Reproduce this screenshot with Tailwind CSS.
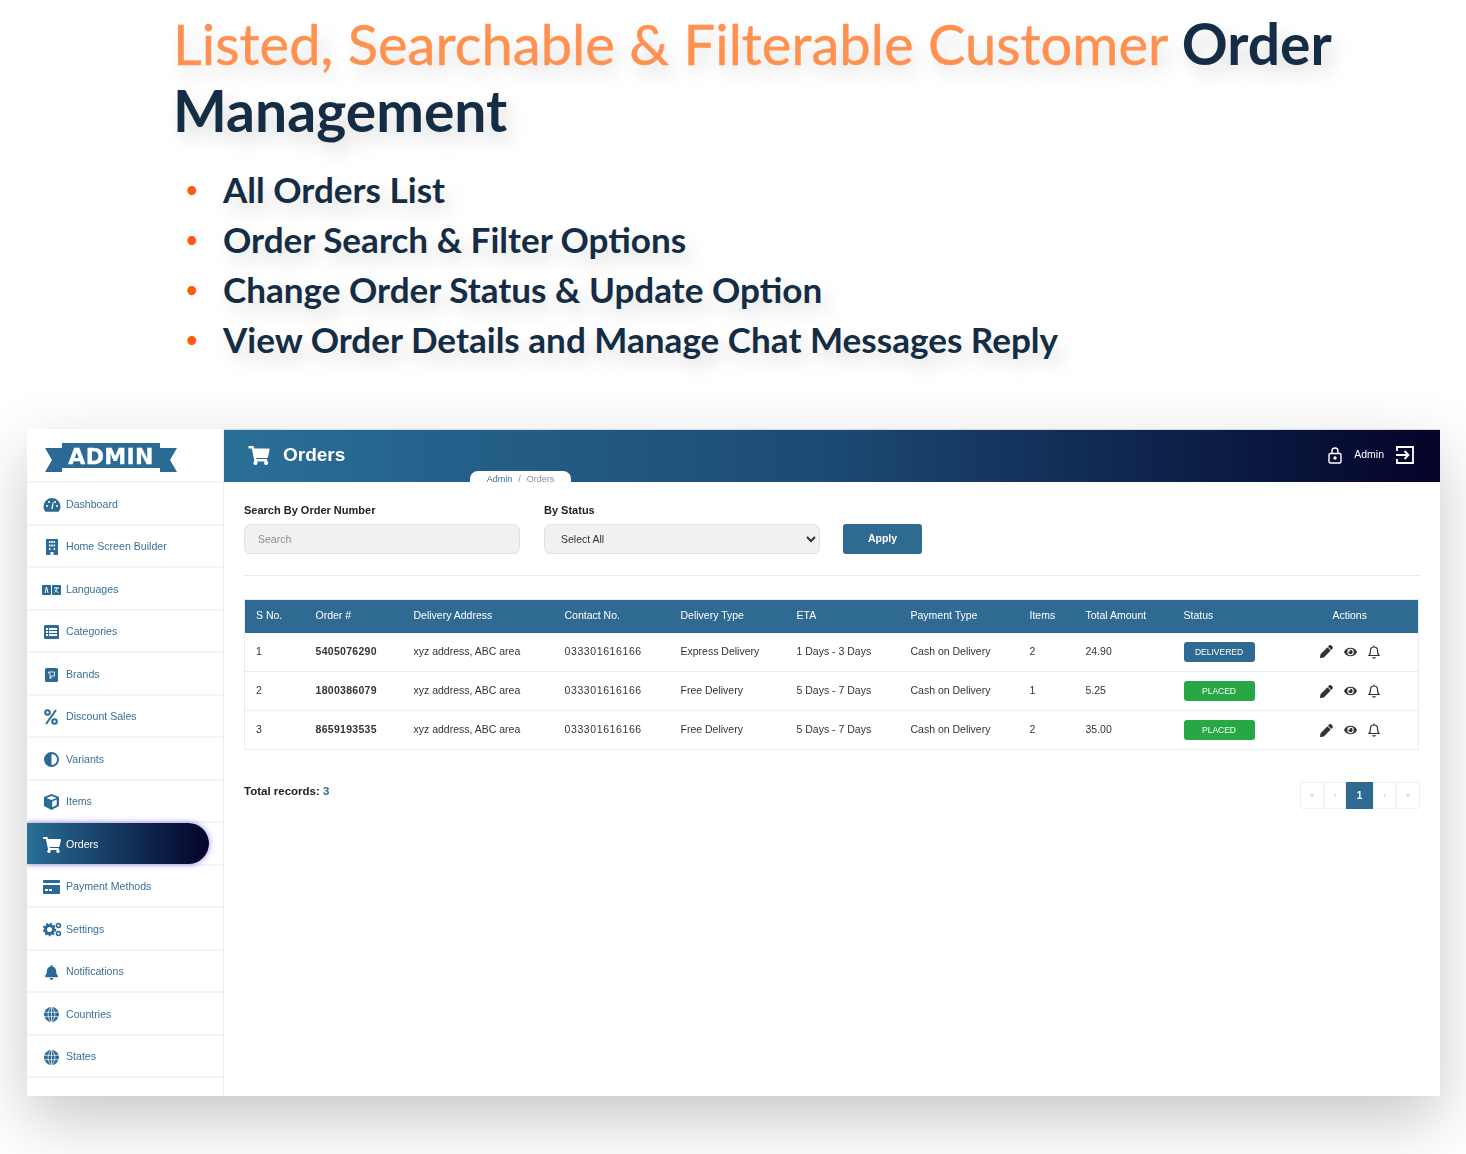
<!DOCTYPE html>
<html lang="en">
<head>
    <meta charset="UTF-8" />
    <title>Customer Order Management</title>
    <script src="https://cdn.jsdelivr.net/npm/@tailwindcss/browser@4"></script>
</head>
<body class="bg-white font-['Lato',sans-serif] w-[1466px] h-[1154px] overflow-hidden">

    <section class="pl-[173px] pr-[100px] pt-[10px] h-[429px] [text-shadow:6px_10px_18px_rgba(0,0,0,0.15)]">
        <h1 class="text-[56.1px] leading-[67px] text-[#ff9150] [-webkit-text-stroke:0.4px_#ff9150]">Listed, Searchable &amp; Filterable Customer <span class="text-[57px] font-bold text-[#142d44] [-webkit-text-stroke:0]">Order</span> <span class="text-[57px] font-bold text-[#142d44] [-webkit-text-stroke:0]">Management</span></h1>
        <ul class="mt-[20px] text-[35.1px] leading-[50px] font-bold text-[#142d44]">
            <li class="flex items-center"><span class="w-[50px] text-[#ff5a0a] pl-[13px] text-[20px] [text-shadow:none]">•</span>All Orders List</li>
            <li class="flex items-center"><span class="w-[50px] text-[#ff5a0a] pl-[13px] text-[20px] [text-shadow:none]">•</span>Order Search &amp; Filter Options</li>
            <li class="flex items-center"><span class="w-[50px] text-[#ff5a0a] pl-[13px] text-[20px] [text-shadow:none]">•</span>Change Order Status &amp; Update Option</li>
            <li class="flex items-center"><span class="w-[50px] text-[#ff5a0a] pl-[13px] text-[20px] [text-shadow:none]">•</span>View Order Details and Manage Chat Messages Reply</li>
        </ul>
    </section>

    <div class="ml-[27px] w-[1413px] h-[667px] bg-white shadow-[0_24px_60px_rgba(0,0,0,0.22)]">
        <div class="flex h-full [filter:blur(0.6px)] font-['Liberation_Sans',sans-serif]">

            <!-- sidebar -->
            <aside class="w-[197px] shrink-0 overflow-hidden border-r border-[#eeeeee] text-[10.6px] text-[#3a6f96]">
                <div class="h-[54px] border-b-2 border-[#f3f3f3] pl-[17px] pt-[13px]">
                    <svg width="134" height="32" viewBox="0 0 134 32">
                        <polygon points="18,1 116,1 116,6 133,6 126,18 133,30 116,30 116,26 18,26 18,30 1,30 8,18 1,6 18,6" fill="#2a6a94"/>
                        <text x="67" y="22" text-anchor="middle" fill="#fff" stroke="#fff" stroke-width="0.3" font-family="DejaVu Sans" font-weight="700" font-size="22" letter-spacing="0.3">ADMIN</text>
                    </svg>
                </div>
                <a class="h-[42.5px] pt-[3px] flex items-center border-b-2 border-[#f3f3f3]"><span class="w-[39px] pl-[16px] shrink-0"><svg class="w-[18px] h-[16px]" viewBox="0 0 18 16" fill="#2a6a94"><path d="M9 1a8.500 8.500 0 0 0-8.500 8.500c0 2 .8 3.800 1.800 5.200h13.400c1-1.400 1.800-3.200 1.800-5.200A8.500 8.500 0 0 0 9 1z"/><circle cx="4" cy="9" r="1" fill="#fff"/><circle cx="6" cy="5" r="1" fill="#fff"/><circle cx="12" cy="5" r="1" fill="#fff"/><circle cx="14" cy="9" r="1" fill="#fff"/><path d="M8.300 12l1.500-7 .8.200L9.700 12z" fill="#fff"/></svg></span>Dashboard</a>
                <a class="h-[42.5px] pt-[3px] flex items-center border-b-2 border-[#f3f3f3]"><span class="w-[39px] pl-[19px] shrink-0"><svg class="w-[12px] h-[16px]" viewBox="0 0 12 16" fill="#2a6a94"><path d="M0 0h12v16H7.500v-3h-3v3H0z"/><path d="M3 2h1.500v2H3zM5.300 2h1.500v2H5.300zM7.600 2h1.500v2H7.600zM3 5.500h1.500v2H3zM5.300 5.500h1.500v2H5.300zM7.600 5.500h1.500v2H7.600zM3 9h1.500v2H3zM7.600 9h1.500v2H7.600z" fill="#fff"/></svg></span>Home Screen Builder</a>
                <a class="h-[42.5px] pt-[3px] flex items-center border-b-2 border-[#f3f3f3]"><span class="w-[39px] pl-[15px] shrink-0"><svg class="w-[19px] h-[10px]" viewBox="0 0 19 10" fill="#2a6a94"><rect width="9" height="10" rx="1"/><rect x="10" width="9" height="10" rx="1"/><path d="M3 8l1.500-6 1.500 6M12 3h5M14.500 3c0 2-1 3.500-2 4.500M13.500 5c1 1.500 2 2.300 3 2.600" fill="none" stroke="#fff"/></svg></span>Languages</a>
                <a class="h-[42.5px] pt-[3px] flex items-center border-b-2 border-[#f3f3f3]"><span class="w-[39px] pl-[17px] shrink-0"><svg class="w-[15px] h-[14px]" viewBox="0 0 15 14" fill="#2a6a94"><rect width="15" height="14" rx="1.500"/><path d="M2 3h2v2H2zM5 3h8v2H5zM2 6h2v2H2zM5 6h8v2H5zM2 9h2v2H2zM5 9h8v2H5z" fill="#fff"/></svg></span>Categories</a>
                <a class="h-[42.5px] pt-[3px] flex items-center border-b-2 border-[#f3f3f3]"><span class="w-[39px] pl-[18px] shrink-0"><svg class="w-[13px] h-[14px]" viewBox="0 0 13 14" fill="#2a6a94"><rect width="13" height="14" rx="1.500"/><path d="M3.500 4h6v4h-3.500v2.500h-1V5h-1.500z" fill="none" stroke="#fff" stroke-width=".8"/></svg></span>Brands</a>
                <a class="h-[42.5px] pt-[3px] flex items-center border-b-2 border-[#f3f3f3]"><span class="w-[39px] pl-[17px] shrink-0"><svg class="w-[14px] h-[16px]" viewBox="0 0 14 16" fill="none" stroke="#2a6a94" stroke-width="2"><circle cx="3.500" cy="3.500" r="2.300"/><circle cx="10.500" cy="12.500" r="2.300"/><path d="M12 1L2 15"/></svg></span>Discount Sales</a>
                <a class="h-[42.5px] pt-[3px] flex items-center border-b-2 border-[#f3f3f3]"><span class="w-[39px] pl-[17px] shrink-0"><svg class="w-[15px] h-[15px]" viewBox="0 0 15 15"><circle cx="7.500" cy="7.500" r="6.500" fill="none" stroke="#2a6a94" stroke-width="2"/><path d="M7.500 1a6.500 6.500 0 0 0 0 13z" fill="#2a6a94"/></svg></span>Variants</a>
                <a class="h-[42.5px] pt-[3px] flex items-center border-b-2 border-[#f3f3f3]"><span class="w-[39px] pl-[17px] shrink-0"><svg class="w-[15px] h-[16px]" viewBox="0 0 15 16" fill="#2a6a94"><path d="M7.500 0L15 3v9l-7.500 4L0 12V3z"/><path d="M2.500 4l5-2 5 2-5 2zM8.200 7.500l4.500-2v5.500l-4.500 2.300z" fill="#fff"/></svg></span>Items</a>
                <a class="h-[42.5px] flex items-center border-b-2 border-[#f3f3f3]"><span class="flex items-center h-[41px] w-[182px] pt-[3px] rounded-r-[21px] bg-gradient-to-r from-[#2a6f97] to-[#05042a] text-white shadow-[0_0_6px_rgba(110,80,230,0.7)]"><span class="w-[39px] pl-[16px] shrink-0"><svg class="w-[18px] h-[16px]" viewBox="0 0 576 512" fill="#fff"><path d="M528.120 301.319l47.273-208C578.806 78.301 567.391 64 551.990 64H159.208l-9.166-44.810C147.758 8.021 137.930 0 126.529 0H24C10.745 0 0 10.745 0 24v16c0 13.255 10.745 24 24 24h69.883l70.248 343.435C147.325 417.100 136 435.222 136 456c0 30.928 25.072 56 56 56s56-25.072 56-56c0-15.674-6.447-29.835-16.824-40h209.647C430.447 426.165 424 440.326 424 456c0 30.928 25.072 56 56 56s56-25.072 56-56c0-22.172-12.888-41.332-31.579-50.405l5.517-24.276c3.413-15.018-8.002-29.319-23.403-29.319H218.117l-6.545-32h293.145c11.206 0 20.920-7.754 23.403-18.681z"/></svg></span>Orders</span></a>
                <a class="h-[42.5px] pt-[3px] flex items-center border-b-2 border-[#f3f3f3]"><span class="w-[39px] pl-[16px] shrink-0"><svg class="w-[17px] h-[14px]" viewBox="0 0 17 14" fill="#2a6a94"><rect width="17" height="3" rx="1"/><path d="M0 5h17v8a1 1 0 0 1-1 1H1a1 1 0 0 1-1-1z"/><path d="M2 9h3v2H2zM6 9h3v2H6z" fill="#fff"/></svg></span>Payment Methods</a>
                <a class="h-[42.5px] pt-[3px] flex items-center border-b-2 border-[#f3f3f3]"><span class="w-[39px] pl-[16px] shrink-0"><svg class="w-[19px] h-[15px]" viewBox="0 0 19 15"><circle cx="6.500" cy="7.500" r="4" fill="none" stroke="#2a6a94" stroke-width="3"/><circle cx="6.500" cy="7.500" r="6" fill="none" stroke="#2a6a94" stroke-width="1.600" stroke-dasharray="2 2"/><circle cx="15.500" cy="3.500" r="2" fill="none" stroke="#2a6a94" stroke-width="1.500"/><circle cx="15.500" cy="11.500" r="2" fill="none" stroke="#2a6a94" stroke-width="1.500"/></svg></span>Settings</a>
                <a class="h-[42.5px] pt-[3px] flex items-center border-b-2 border-[#f3f3f3]"><span class="w-[39px] pl-[18px] shrink-0"><svg class="w-[13px] h-[15px]" viewBox="0 0 448 512" fill="#2a6a94"><path d="M224 512c35.320 0 63.970-28.650 63.970-64H160.030c0 35.350 28.650 64 63.970 64zm215.390-149.710c-19.320-20.760-55.470-51.990-55.470-154.290 0-77.700-54.480-139.900-127.940-155.160V32c0-17.670-14.320-32-31.980-32s-31.980 14.330-31.980 32v20.840C118.560 68.100 64.080 130.300 64.080 208c0 102.300-36.150 133.530-55.470 154.290-6 6.450-8.660 14.160-8.610 21.710.11 16.400 12.980 32 32.100 32h383.800c19.120 0 32-15.600 32.100-32 .05-7.550-2.610-15.270-8.610-21.710z"/></svg></span>Notifications</a>
                <a class="h-[42.5px] pt-[3px] flex items-center border-b-2 border-[#f3f3f3]"><span class="w-[39px] pl-[17px] shrink-0"><svg class="w-[15px] h-[15px]" viewBox="0 0 15 15" fill="#2a6a94"><circle cx="7.500" cy="7.500" r="7.500"/><path d="M0 5.300h15M0 9.700h15M7.500 0v15M7.500 0C3 4 3 11 7.500 15M7.500 0C12 4 12 11 7.500 15" fill="none" stroke="#fff" stroke-width=".7"/></svg></span>Countries</a>
                <a class="h-[42.5px] pt-[3px] flex items-center border-b-2 border-[#f3f3f3]"><span class="w-[39px] pl-[17px] shrink-0"><svg class="w-[15px] h-[15px]" viewBox="0 0 15 15" fill="#2a6a94"><circle cx="7.500" cy="7.500" r="7.500"/><path d="M0 5.300h15M0 9.700h15M7.500 0v15M7.500 0C3 4 3 11 7.500 15M7.500 0C12 4 12 11 7.500 15" fill="none" stroke="#fff" stroke-width=".7"/></svg></span>States</a>
            </aside>

            <main class="flex-1 min-w-0">
                <header class="relative h-[53px] pb-[2px] bg-gradient-to-r from-[#2a6f97] via-[#1c4a74] to-[#05042a] flex items-center text-white pl-[24px] pr-[25px] border-t border-[#d8d8d8]">
                    <svg class="w-[22px] h-[19px] mr-[13px]" viewBox="0 0 576 512" fill="#fff"><path d="M528.120 301.319l47.273-208C578.806 78.301 567.391 64 551.990 64H159.208l-9.166-44.810C147.758 8.021 137.930 0 126.529 0H24C10.745 0 0 10.745 0 24v16c0 13.255 10.745 24 24 24h69.883l70.248 343.435C147.325 417.100 136 435.222 136 456c0 30.928 25.072 56 56 56s56-25.072 56-56c0-15.674-6.447-29.835-16.824-40h209.647C430.447 426.165 424 440.326 424 456c0 30.928 25.072 56 56 56s56-25.072 56-56c0-22.172-12.888-41.332-31.579-50.405l5.517-24.276c3.413-15.018-8.002-29.319-23.403-29.319H218.117l-6.545-32h293.145c11.206 0 20.920-7.754 23.403-18.681z"/></svg>
                    <h2 class="text-[19px] font-bold">Orders</h2>
                    <div class="ml-auto flex items-center text-[10.5px]">
                        <svg class="w-[14px] h-[17px] mr-[12px]" viewBox="0 0 14 17" fill="none" stroke="#fff" stroke-width="1.400"><rect x="1" y="6.500" width="12" height="9.500" rx="1.500"/><path d="M4 6.500V4a3 3 0 0 1 6 0v2.500"/><circle cx="7" cy="11" r="1" fill="#fff"/></svg>
                        <span class="mr-[11px]">Admin</span>
                        <svg class="w-[20px] h-[20px]" viewBox="0 0 20 20" fill="none" stroke="#fff" stroke-width="1.800"><path d="M2 6V2h16v16H2v-4"/><path d="M1 10h12M9.500 6l4 4-4 4"/></svg>
                    </div>
                    <nav class="absolute left-[246px] bottom-0 h-[11px] w-[101px] pt-[6px] bg-white rounded-t-[8px] flex items-center justify-center text-[9px] text-[#8a8f96] gap-[6px]"><span class="text-[#3a6f96]">Admin</span><span>/</span><span>Orders</span></nav>
                </header>

                <div class="px-[20px]">
                    <form class="flex items-end h-[72px]">
                        <div class="w-[276px] mr-[24px]">
                            <label class="block text-[11px] font-bold text-[#222] mb-[8px] leading-[12px]">Search By Order Number</label>
                            <input placeholder="Search" class="w-full h-[30px] px-[13px] bg-[#f1f1f1] border border-[#e3e3e3] rounded-[6px] text-[10.5px] placeholder:text-[#8d8d8d]" />
                        </div>
                        <div class="w-[276px] mr-[23px]">
                            <label class="block text-[11px] font-bold text-[#222] mb-[8px] leading-[12px]">By Status</label>
                            <select class="w-full h-[30px] px-[12px] bg-[#f1f1f1] border border-[#e3e3e3] rounded-[6px] text-[10.5px] text-[#333]"><option>Select All</option></select>
                        </div>
                        <button type="button" class="w-[79px] h-[30px] pb-[1px] rounded-[3px] bg-[#2f6a92] text-white text-[10.5px] font-bold">Apply</button>
                    </form>
                    <hr class="mt-[21px] border-[#ececec]" />

                    <table class="mt-[24px] -translate-y-[1px] w-[1175px] table-fixed border-collapse text-[10.5px] text-[#333] border border-[#ececec]">
                        <colgroup><col class="w-[59px]"/><col class="w-[98px]"/><col class="w-[151px]"/><col class="w-[117px]"/><col class="w-[116px]"/><col class="w-[114px]"/><col class="w-[119px]"/><col class="w-[56px]"/><col class="w-[98px]"/><col class="w-[109px]"/><col/></colgroup>
                        <thead class="bg-[#2f6a92] text-white text-left">
                            <tr class="h-[33px]">
                                <th class="pl-[11px] font-normal">S No.</th><th class="pl-[12px] font-normal">Order #</th><th class="pl-[12px] font-normal">Delivery Address</th><th class="pl-[12px] font-normal">Contact No.</th><th class="pl-[11px] font-normal">Delivery Type</th><th class="pl-[11px] font-normal">ETA</th><th class="pl-[11px] font-normal">Payment Type</th><th class="pl-[11px] font-normal">Items</th><th class="pl-[11px] font-normal">Total Amount</th><th class="pl-[11px] font-normal">Status</th><th class="font-normal text-center">Actions</th>
                            </tr>
                        </thead>
                        <tbody>
                            <tr class="h-[39px] border-b border-[#ececec]">
                                <td class="pl-[11px]">1</td><td class="pl-[12px] font-bold tracking-[0.3px]">5405076290</td><td class="pl-[12px]">xyz address, ABC area</td><td class="pl-[12px] tracking-[0.6px]">033301616166</td><td class="pl-[11px]">Express Delivery</td><td class="pl-[11px]">1 Days - 3 Days</td><td class="pl-[11px]">Cash on Delivery</td><td class="pl-[11px]">2</td><td class="pl-[11px]">24.90</td>
                                <td class="pl-[11px]"><span class="block w-[71px] h-[20px] leading-[20px] text-center rounded-[3px] bg-[#2f6a92] text-white text-[8.5px]">DELIVERED</span></td>
                                <td><div class="flex items-center justify-center gap-[11px]">
                                    <svg class="w-[13px] h-[13px]" viewBox="0 0 512 512" fill="#333"><path d="M497.900 142.100l-46.100 46.100c-4.700 4.700-12.300 4.700-17 0l-111-111c-4.700-4.700-4.700-12.300 0-17l46.100-46.100c18.700-18.700 49.100-18.700 67.900 0l60.100 60.100c18.800 18.700 18.800 49.100 0 67.900zM284.200 99.800L21.600 362.400.4 483.900c-2.900 16.400 11.400 30.600 27.800 27.800l121.500-21.300 262.600-262.600c4.700-4.700 4.700-12.300 0-17l-111-111c-4.800-4.700-12.400-4.700-17.100 0z"/></svg>
                                    <svg class="w-[13px] h-[12px]" viewBox="0 0 576 512" fill="#333"><path d="M572.520 241.400C518.290 135.590 410.930 64 288 64S57.680 135.640 3.480 241.410a32.350 32.350 0 0 0 0 29.190C57.710 376.410 165.070 448 288 448s230.320-71.640 284.520-177.410a32.350 32.350 0 0 0 0-29.190zM288 400a144 144 0 1 1 144-144 143.930 143.930 0 0 1-144 144zm0-240a95.310 95.310 0 0 0-25.310 3.790 47.850 47.850 0 0 1-66.900 66.900A95.780 95.780 0 1 0 288 160z"/></svg>
                                    <svg class="w-[12px] h-[14px]" viewBox="0 0 12 14" fill="none" stroke="#333" stroke-width="1.200"><path d="M1 10.500c1-1 1.500-2.500 1.500-5a3.500 3.500 0 0 1 7 0c0 2.500.5 4 1.500 5zM6 2V.5M4.800 12a1.200 1.200 0 0 0 2.400 0"/></svg>
                                </div></td>
                            </tr>
                            <tr class="h-[39px] border-b border-[#ececec]">
                                <td class="pl-[11px]">2</td><td class="pl-[12px] font-bold tracking-[0.3px]">1800386079</td><td class="pl-[12px]">xyz address, ABC area</td><td class="pl-[12px] tracking-[0.6px]">033301616166</td><td class="pl-[11px]">Free Delivery</td><td class="pl-[11px]">5 Days - 7 Days</td><td class="pl-[11px]">Cash on Delivery</td><td class="pl-[11px]">1</td><td class="pl-[11px]">5.25</td>
                                <td class="pl-[11px]"><span class="block w-[71px] h-[20px] leading-[20px] text-center rounded-[3px] bg-[#28a745] text-white text-[8.5px]">PLACED</span></td>
                                <td><div class="flex items-center justify-center gap-[11px]">
                                    <svg class="w-[13px] h-[13px]" viewBox="0 0 512 512" fill="#333"><path d="M497.900 142.100l-46.100 46.100c-4.700 4.700-12.300 4.700-17 0l-111-111c-4.700-4.700-4.700-12.300 0-17l46.100-46.100c18.700-18.700 49.100-18.700 67.900 0l60.100 60.100c18.800 18.700 18.800 49.100 0 67.900zM284.200 99.800L21.600 362.400.4 483.900c-2.900 16.400 11.400 30.600 27.800 27.800l121.500-21.300 262.600-262.600c4.700-4.700 4.700-12.300 0-17l-111-111c-4.800-4.700-12.400-4.700-17.100 0z"/></svg>
                                    <svg class="w-[13px] h-[12px]" viewBox="0 0 576 512" fill="#333"><path d="M572.520 241.400C518.290 135.590 410.930 64 288 64S57.680 135.640 3.480 241.410a32.350 32.350 0 0 0 0 29.190C57.710 376.410 165.070 448 288 448s230.320-71.640 284.520-177.410a32.350 32.350 0 0 0 0-29.190zM288 400a144 144 0 1 1 144-144 143.930 143.930 0 0 1-144 144zm0-240a95.310 95.310 0 0 0-25.310 3.790 47.850 47.850 0 0 1-66.900 66.900A95.780 95.780 0 1 0 288 160z"/></svg>
                                    <svg class="w-[12px] h-[14px]" viewBox="0 0 12 14" fill="none" stroke="#333" stroke-width="1.200"><path d="M1 10.500c1-1 1.500-2.500 1.500-5a3.500 3.500 0 0 1 7 0c0 2.500.5 4 1.500 5zM6 2V.5M4.800 12a1.200 1.200 0 0 0 2.400 0"/></svg>
                                </div></td>
                            </tr>
                            <tr class="h-[39px]">
                                <td class="pl-[11px]">3</td><td class="pl-[12px] font-bold tracking-[0.3px]">8659193535</td><td class="pl-[12px]">xyz address, ABC area</td><td class="pl-[12px] tracking-[0.6px]">033301616166</td><td class="pl-[11px]">Free Delivery</td><td class="pl-[11px]">5 Days - 7 Days</td><td class="pl-[11px]">Cash on Delivery</td><td class="pl-[11px]">2</td><td class="pl-[11px]">35.00</td>
                                <td class="pl-[11px]"><span class="block w-[71px] h-[20px] leading-[20px] text-center rounded-[3px] bg-[#28a745] text-white text-[8.5px]">PLACED</span></td>
                                <td><div class="flex items-center justify-center gap-[11px]">
                                    <svg class="w-[13px] h-[13px]" viewBox="0 0 512 512" fill="#333"><path d="M497.900 142.100l-46.100 46.100c-4.700 4.700-12.300 4.700-17 0l-111-111c-4.700-4.700-4.700-12.300 0-17l46.100-46.100c18.700-18.700 49.100-18.700 67.900 0l60.100 60.100c18.800 18.700 18.800 49.100 0 67.900zM284.200 99.800L21.600 362.400.4 483.900c-2.900 16.400 11.400 30.600 27.800 27.800l121.500-21.300 262.600-262.600c4.700-4.700 4.700-12.300 0-17l-111-111c-4.800-4.700-12.400-4.700-17.100 0z"/></svg>
                                    <svg class="w-[13px] h-[12px]" viewBox="0 0 576 512" fill="#333"><path d="M572.520 241.400C518.290 135.590 410.930 64 288 64S57.680 135.640 3.480 241.410a32.350 32.350 0 0 0 0 29.190C57.710 376.410 165.070 448 288 448s230.320-71.640 284.520-177.410a32.350 32.350 0 0 0 0-29.190zM288 400a144 144 0 1 1 144-144 143.930 143.930 0 0 1-144 144zm0-240a95.310 95.310 0 0 0-25.310 3.790 47.850 47.850 0 0 1-66.900 66.900A95.780 95.780 0 1 0 288 160z"/></svg>
                                    <svg class="w-[12px] h-[14px]" viewBox="0 0 12 14" fill="none" stroke="#333" stroke-width="1.200"><path d="M1 10.500c1-1 1.500-2.500 1.500-5a3.500 3.500 0 0 1 7 0c0 2.500.5 4 1.500 5zM6 2V.5M4.800 12a1.200 1.200 0 0 0 2.400 0"/></svg>
                                </div></td>
                            </tr>
                        </tbody>
                    </table>

                    <div class="flex justify-between mt-[31px]">
                        <p class="text-[11.5px] font-bold text-[#222] pt-[1px]">Total records: <span class="text-[#2f6a92]">3</span></p>
                        <div class="flex h-[27px] text-[8px] text-[#bbb]">
                            <span class="w-[24px] flex items-center justify-center border border-[#f1f1f1] rounded-l-[3px]">«</span>
                            <span class="w-[22px] flex items-center justify-center border border-[#f1f1f1]">‹</span>
                            <span class="w-[27px] flex items-center justify-center bg-[#2f6a92] text-white text-[10px] font-bold">1</span>
                            <span class="w-[23px] flex items-center justify-center border border-[#f1f1f1]">›</span>
                            <span class="w-[24px] flex items-center justify-center border border-[#f1f1f1] rounded-r-[3px]">»</span>
                        </div>
                    </div>
                </div>
            </main>
        </div>
    </div>
</body>
</html>
